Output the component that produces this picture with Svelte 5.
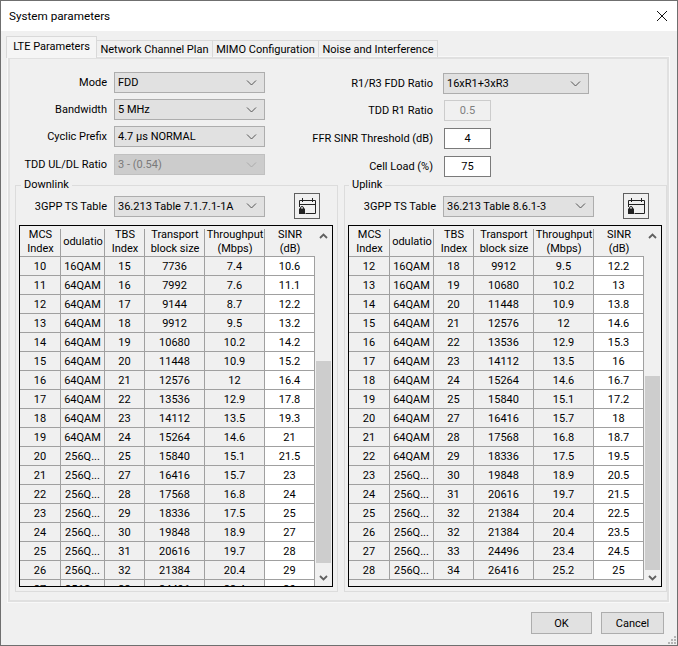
<script>
	const fields = ['Mode', 'Bandwidth', 'Cyclic Prefix'];
	const q16 = '16QAM', q64 = '64QAM', q256 = '256Q...';

	let groups = [
		{
			name: 'Downlink',
			table: '36.213 Table 7.1.7.1-1A',
			thumb: 'down',
			rows: [
				[10, q16, 15, 7736, 7.4, 10.6],
				[11, q64, 16, 7992, 7.6, 11.1],
				[12, q64, 17, 9144, 8.7, 12.2],
				[13, q64, 18, 9912, 9.5, 13.2],
				[14, q64, 19, 10680, 10.2, 14.2],
				[15, q64, 20, 11448, 10.9, 15.2],
				[16, q64, 21, 12576, 12, 16.4],
				[17, q64, 22, 13536, 12.9, 17.8],
				[18, q64, 23, 14112, 13.5, 19.3],
				[19, q64, 24, 15264, 14.6, 21],
				[20, q256, 25, 15840, 15.1, 21.5],
				[21, q256, 27, 16416, 15.7, 23],
				[22, q256, 28, 17568, 16.8, 24],
				[23, q256, 29, 18336, 17.5, 25],
				[24, q256, 30, 19848, 18.9, 27],
				[25, q256, 31, 20616, 19.7, 28],
				[26, q256, 32, 21384, 20.4, 29],
				[27, q256, 33, 24496, 23.4, 30],
			],
		},
		{
			name: 'Uplink',
			table: '36.213 Table 8.6.1-3',
			thumb: 'up',
			rows: [
				[12, q16, 18, 9912, 9.5, 12.2],
				[13, q16, 19, 10680, 10.2, 13],
				[14, q64, 20, 11448, 10.9, 13.8],
				[15, q64, 21, 12576, 12, 14.6],
				[16, q64, 22, 13536, 12.9, 15.3],
				[17, q64, 23, 14112, 13.5, 16],
				[18, q64, 24, 15264, 14.6, 16.7],
				[19, q64, 25, 15840, 15.1, 17.2],
				[20, q64, 27, 16416, 15.7, 18],
				[21, q64, 28, 17568, 16.8, 18.7],
				[22, q64, 29, 18336, 17.5, 19.5],
				[23, q256, 30, 19848, 18.9, 20.5],
				[24, q256, 31, 20616, 19.7, 21.5],
				[25, q256, 32, 21384, 20.4, 22.5],
				[26, q256, 32, 21384, 20.4, 23.5],
				[27, q256, 33, 24496, 23.4, 24.5],
				[28, q256, 34, 26416, 25.2, 25],
			],
		},
	];
	const values = { Mode: 'FDD', Bandwidth: '5 MHz', 'Cyclic Prefix': '4.7 µs NORMAL' };
	const tabs = ['Network Channel Plan', 'MIMO Configuration', 'Noise and Interference'];
</script>

{#snippet chevron()}
	<svg class="chev" width="11" height="6" viewBox="0 0 11 6"><path d="M1 .5l4.5 4.5L10 .5" fill="none" stroke="currentColor" /></svg>
{/snippet}

<main class="window">
	<header class="title">
		<span>System parameters</span>
		<svg width="12" height="12" viewBox="0 0 12 12"><path d="M1 1l10 10M11 1L1 11" stroke="#111" stroke-width="1" fill="none" /></svg>
	</header>

	<nav class="tabs">
		<div class="tab active">LTE Parameters</div>
		{#each tabs as t}
			<div class="tab">{t}</div>
		{/each}
	</nav>

	<section class="panel">
		<div class="form">
			<div class="col">
				{#each fields as f}
					<div class="row">
						<label>{f}</label>
						<div class="combo"><span>{values[f]}</span>{@render chevron()}</div>
					</div>
				{/each}
				<div class="row last">
					<label>TDD UL/DL Ratio</label>
					<div class="combo off"><span>3 - (0.54)</span>{@render chevron()}</div>
				</div>
			</div>
			<div class="col right">
				<div class="row">
					<label>R1/R3 FDD Ratio</label>
					<div class="combo short"><span>16xR1+3xR3</span>{@render chevron()}</div>
				</div>
				<div class="row">
					<label>TDD R1 Ratio</label>
					<div class="input off">0.5</div>
				</div>
				<div class="row next">
					<label>FFR SINR Threshold (dB)</label>
					<div class="input">4</div>
				</div>
				<div class="row next">
					<label>Cell Load (%)</label>
					<div class="input">75</div>
				</div>
			</div>
		</div>

		<div class="groups">
			{#each groups as g}
				<fieldset class="group">
					<legend>{g.name}</legend>
					<div class="row ts">
						<label>3GPP TS Table</label>
						<div class="combo"><span>{g.table}</span>{@render chevron()}</div>
						<button class="lock" aria-label="Lock table">
							<svg width="18" height="18" viewBox="0 0 18 18" fill="none" stroke="#222">
								<path d="M1.5 10V3.5h16v13h-10M1.5 7.5h16M4.5 1v4M14.5 1v4" />
								<path d="M2.5 12v-1a1.5 1.5 0 0 1 3 0v1" />
								<rect x="1.5" y="12" width="5" height="4.5" fill="#222" />
							</svg>
						</button>
					</div>
					<div class="grid">
						<div class="scroll">
							<table>
								<thead>
									<tr>
										<th>MCS<br />Index</th>
										<th class="clip">odulatio</th>
										<th>TBS<br />Index</th>
										<th>Transport<br />block size</th>
										<th>Throughput<br />(Mbps)</th>
										<th>SINR<br />(dB)</th>
									</tr>
								</thead>
								<tbody>
									{#each g.rows as r}
										<tr>
											{#each r as cell}
												<td>{cell}</td>
											{/each}
										</tr>
									{/each}
								</tbody>
							</table>
						</div>
						<div class="bar">
							<svg width="9" height="6" viewBox="0 0 9 6"><path d="M1 5l3.5-3.5L8 5" fill="none" stroke="#606060" stroke-width="1.8" /></svg>
							<div class="thumb {g.thumb}"></div>
							<svg width="9" height="6" viewBox="0 0 9 6"><path d="M1 1l3.5 3.5L8 1" fill="none" stroke="#606060" stroke-width="1.8" /></svg>
						</div>
					</div>
				</fieldset>
			{/each}
		</div>
	</section>

	<footer class="actions">
		<button class="btn ok">OK</button>
		<button class="btn cancel">Cancel</button>
		<svg class="grip" width="9" height="9" viewBox="0 0 9 9" fill="#b4b4b4">
			<rect x="6" y="0" width="2" height="2" />
			<rect x="3" y="3" width="2" height="2" />
			<rect x="6" y="3" width="2" height="2" />
			<rect x="0" y="6" width="2" height="2" />
			<rect x="3" y="6" width="2" height="2" />
			<rect x="6" y="6" width="2" height="2" />
		</svg>
	</footer>
</main>

<style>
	:global(body) {
		margin: 0;
		background: #f0f0f0;
	}

	.window {
		box-sizing: border-box;
		width: 678px;
		height: 646px;
		display: flex;
		flex-direction: column;
		background: #f0f0f0;
		border: 1px solid #6f6f6f;
		font: 11px/15px Roboto, sans-serif;
		color: #000;
		overflow: hidden;
	}

	.title {
		height: 30px;
		flex: none;
		background: #fff;
		display: flex;
		align-items: center;
		justify-content: space-between;
		padding: 0 9px 0 8px;
		font-size: 11.7px;
	}

	.tabs {
		display: flex;
		align-items: flex-end;
		height: 26px;
		flex: none;
		padding-left: 5px;
		position: relative;
		z-index: 1;
	}

	.tab {
		box-sizing: border-box;
		height: 17px;
		border: 1px solid #d9d9d9;
		border-bottom: 0;
		border-left: 0;
		display: flex;
		align-items: center;
		justify-content: center;
		white-space: nowrap;
	}

	.tab:nth-child(2) { width: 116px; }
	.tab:nth-child(3) { width: 106px; }
	.tab:nth-child(4) { width: 119px; }

	.tab.active {
		width: 91px;
		height: 22px;
		background: #f5f5f5;
		border: 1px solid #d9d9d9;
		border-bottom: 0;
		margin-bottom: -1px;
		padding-bottom: 3px;
	}

	.panel {
		box-sizing: border-box;
		margin: 0 8px 0 7px;
		width: 661px;
		height: 545px;
		flex: none;
		border: 2px solid #e0e0e0;
		outline: 1px solid #f8f8f8;
		padding: 13px 0 0 5px;
	}

	.form {
		display: grid;
		grid-template-columns: 329px 320px;
		height: 106px;
	}

	.col {
		display: flex;
		flex-direction: column;
	}

	.col.right {
		padding-top: 1px;
	}

	.row {
		display: flex;
		align-items: center;
		height: 21px;
		margin-bottom: 6px;
	}

	.row.last { margin-top: 1px; }
	.row.next { margin-top: 1px; }

	label {
		width: 92px;
		white-space: nowrap;
		flex: none;
		margin-right: 7px;
		display: flex;
		justify-content: flex-end;
	}

	.right label {
		width: 89px;
		margin-right: 10px;
	}

	.combo {
		box-sizing: border-box;
		width: 151px;
		height: 21px;
		flex: none;
		background: #e1e1e1;
		border: 1px solid #adadad;
		display: flex;
		align-items: center;
		justify-content: space-between;
		padding: 0 4px 0 3px;
		color: #000;
	}

	.combo.short {
		width: 146px;
	}

	.chev {
		color: #555;
		margin-right: 3px;
	}

	.combo.off {
		background: #ccc;
		border-color: #c0c0c0;
		color: #7a7a7a;
	}

	.combo.off .chev {
		color: #aaa;
	}

	.input {
		box-sizing: border-box;
		width: 47px;
		height: 21px;
		margin-left: 1px;
		background: #fff;
		border: 1px solid #7a7a7a;
		display: flex;
		align-items: center;
		justify-content: center;
		flex: none;
	}

	.input.off {
		background: #f0f0f0;
		border-color: #ccc;
		color: #7f7f7f;
	}

	.groups {
		display: grid;
		grid-template-columns: 323px 323px;
		gap: 6px;
	}

	.group {
		box-sizing: border-box;
		margin: 0;
		padding: 0 3px 0 3px;
		height: 414px;
		border: 1px solid #dcdcdc;
		min-width: 0;
	}

	legend {
		margin-left: 2px;
		padding: 0 3px;
		line-height: 14px;
	}

	.group:last-child legend {
		margin-left: 1px;
	}

	.ts {
		height: 26px;
		margin: 1px 0 6px -4px;
	}

	.ts label {
		margin-right: 7px;
	}

	.group:last-child .ts label {
		width: 92px;
		margin-right: 7px;
	}

	.lock {
		box-sizing: border-box;
		width: 26px;
		height: 26px;
		margin-left: 29px;
		padding: 0;
		border: 1px solid #5f5f5f;
		background: #f0f0f0;
		display: flex;
		align-items: center;
		justify-content: center;
	}

	.grid {
		box-sizing: border-box;
		width: 314px;
		height: 362px;
		border: 1px solid #000;
		display: flex;
		background: #f0f0f0;
	}

	.scroll {
		width: 295px;
		overflow: hidden;
		flex: none;
	}

	table {
		border-collapse: separate;
		border-spacing: 0;
		table-layout: fixed;
		width: 295px;
	}

	th, td {
		box-sizing: border-box;
		padding: 0;
		text-align: center;
		font-weight: 400;
		overflow: hidden;
		white-space: nowrap;
		background: #f0f0f0;
	}

	th {
		height: 30px;
		line-height: 14px;
		border-bottom: 1px solid #a0a0a0;
		position: relative;
		padding-top: 2px;
	}

	th:not(:last-child)::after {
		content: "";
		position: absolute;
		right: 0;
		top: 3px;
		bottom: 0;
		width: 1px;
		background: #a0a0a0;
	}

	td {
		height: 19px;
		line-height: 17px;
		padding-top: 1px;
		border-right: 1px solid #a0a0a0;
		border-bottom: 1px solid #a0a0a0;
	}

	td:last-child {
		background: #fff;
	}

	th:nth-child(1) { width: 41px; }
	th:nth-child(2) { width: 44px; }
	th:nth-child(3) { width: 40px; }
	th:nth-child(4) { width: 60px; }
	th:nth-child(5) { width: 60px; }
	th:nth-child(6) { width: 50px; }

	.bar {
		flex: 1;
		display: flex;
		flex-direction: column;
		align-items: center;
		justify-content: space-between;
		padding: 7px 0 5px;
	}

	.thumb {
		width: 15px;
		background: #cdcdcd;
	}

	.thumb.down {
		height: 202px;
		margin-top: 121px;
		margin-bottom: 12px;
	}

	.thumb.up {
		height: 194px;
		margin-top: 136px;
		margin-bottom: 5px;
	}

	.actions {
		flex: 1;
		display: flex;
		justify-content: flex-end;
		align-items: flex-start;
		gap: 9px;
		padding: 10px 13px 0 0;
		position: relative;
	}

	.btn {
		box-sizing: border-box;
		height: 22px;
		padding: 0;
		background: #e1e1e1;
		border: 1px solid #adadad;
		font: inherit;
		color: #000;
	}

	.ok { width: 61px; }
	.cancel { width: 63px; }

	.grip {
		position: absolute;
		right: 0;
		bottom: 0;
	}
</style>
